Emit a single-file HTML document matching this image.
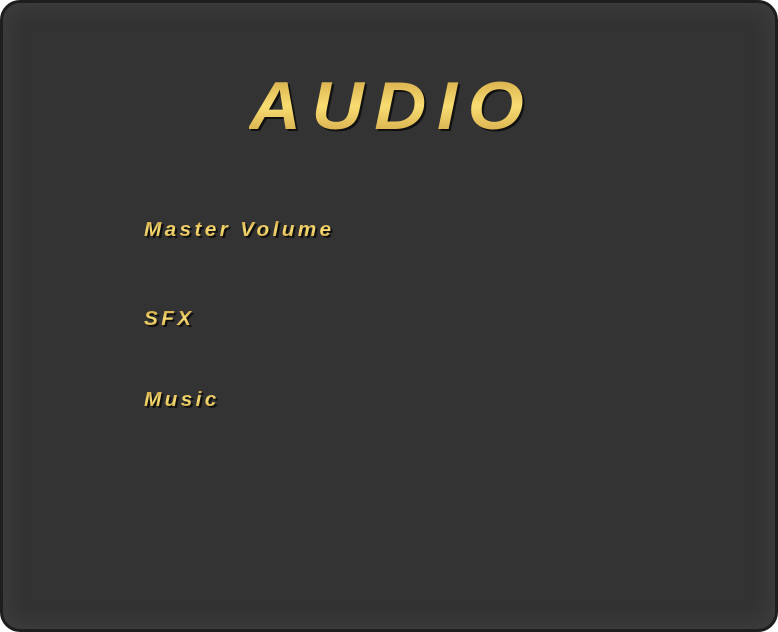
<!DOCTYPE html>
<html><head><style>
html,body{margin:0;padding:0;background:#fff;width:778px;height:632px;overflow:hidden}
.panel{position:absolute;left:0;top:0;width:772px;height:626px;border:3px solid #1e1e1e;border-radius:20px;background:#333;box-shadow:inset 0 0 18px 6px #3d3d3d}
.t{position:absolute;font-family:"Liberation Sans",sans-serif;font-weight:bold;font-style:italic;background:linear-gradient(#c99a3c,#f8dd72 50%,#c99a3c);-webkit-background-clip:text;background-clip:text;color:transparent;filter:drop-shadow(2px 2px 0 #111);white-space:nowrap;transform-origin:0 0}
.title{left:249px;top:66px;font-size:68px;letter-spacing:10px;line-height:80px;transform:scaleX(1.06)}
.l{left:144px;font-size:20px;letter-spacing:3.2px;line-height:24px;transform:scaleX(1.04)}
</style></head><body>
<div class="panel"></div>
<div class="t title">AUDIO</div>
<div class="t l" style="top:218px">Master Volume</div>
<div class="t l" style="top:307px">SFX</div>
<div class="t l" style="top:388px">Music</div>
</body></html>
